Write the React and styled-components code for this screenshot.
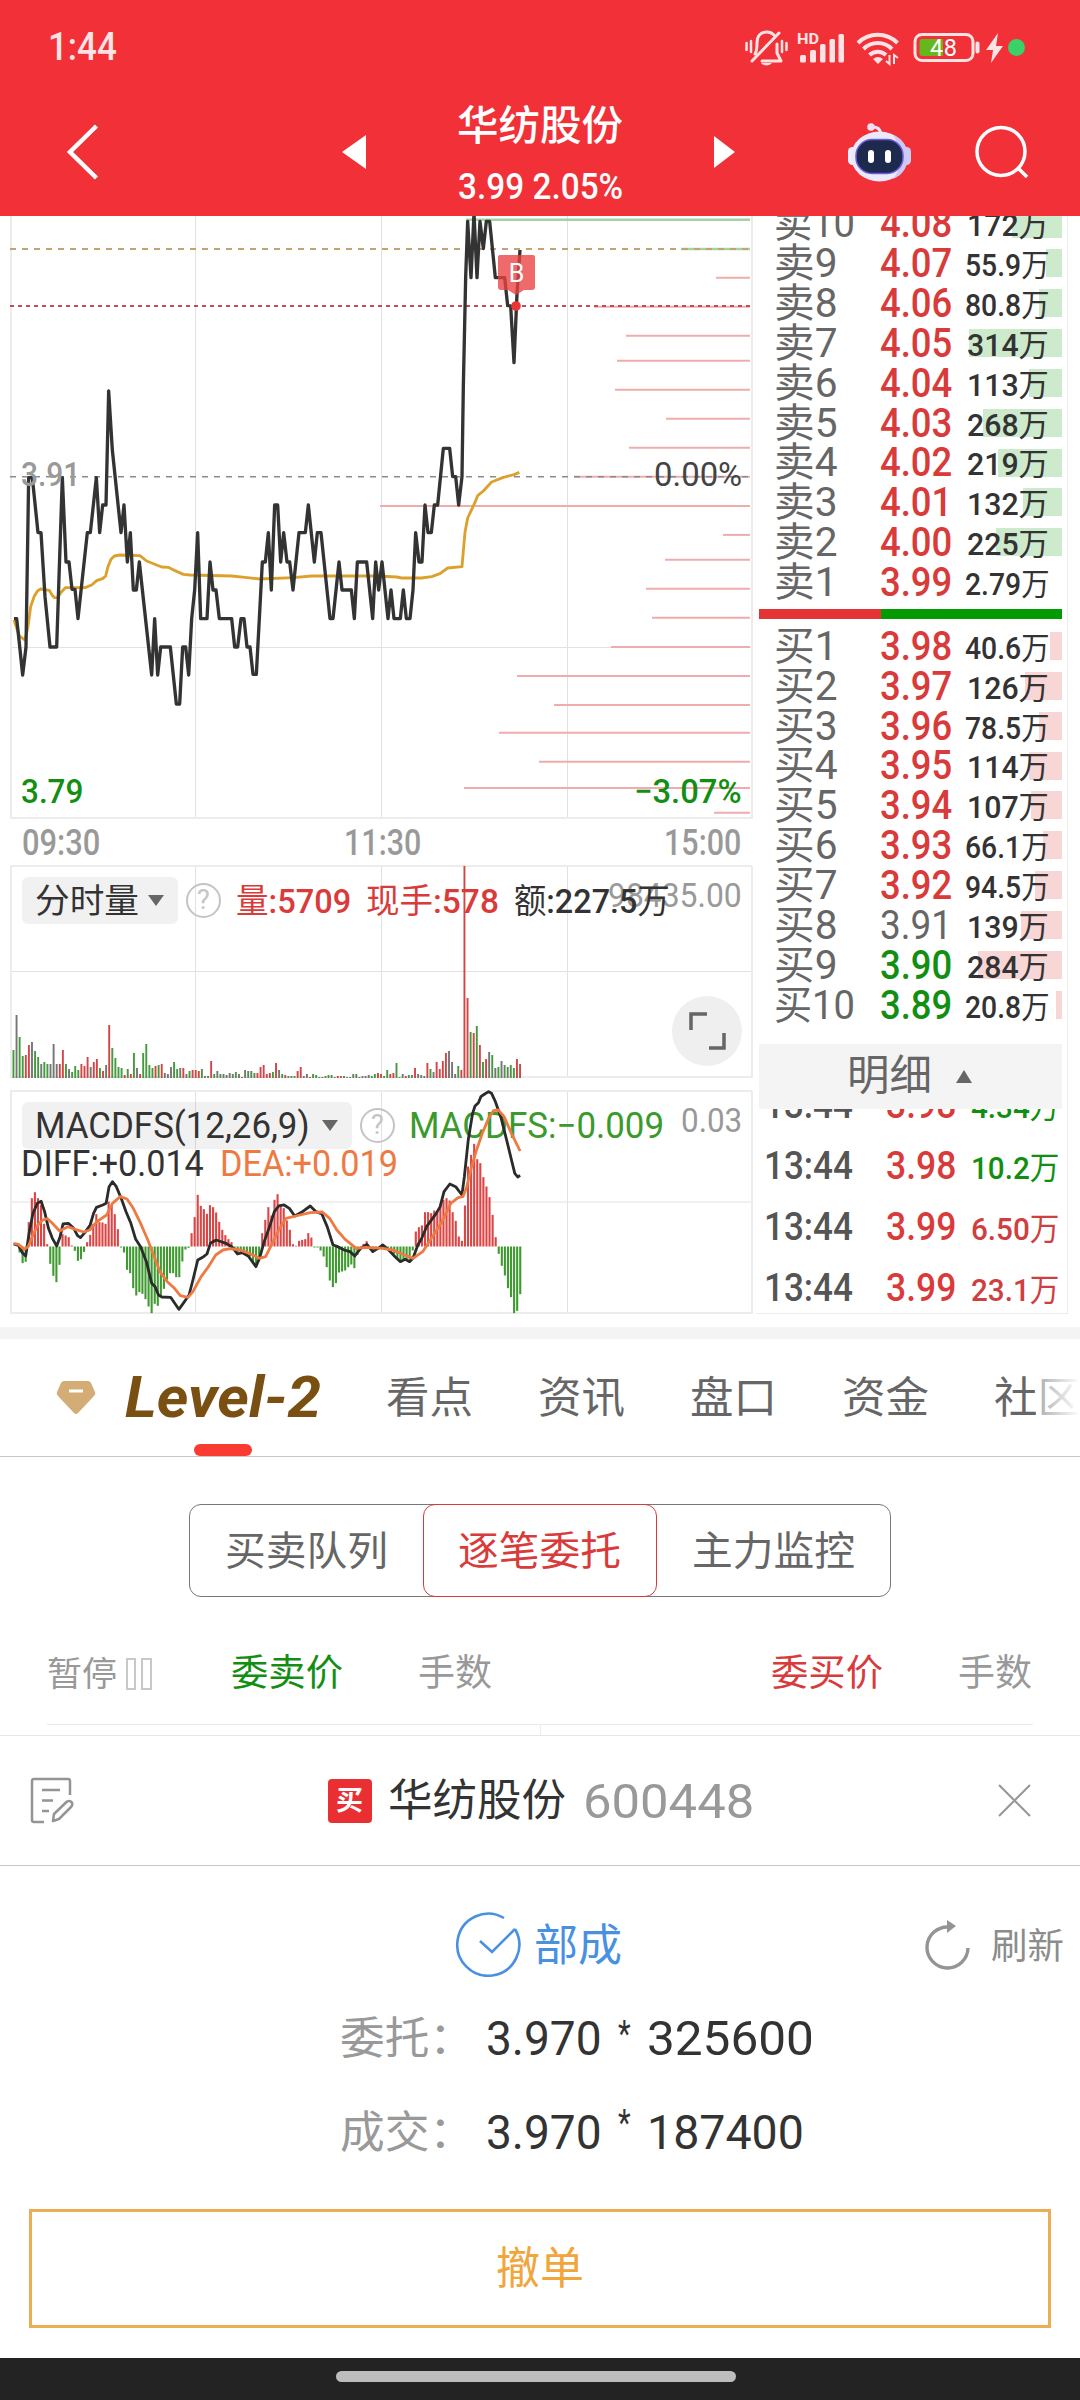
import React, { useLayoutEffect, useRef, useState } from 'react'
import styled, { createGlobalStyle } from 'styled-components'

const GlobalStyle = createGlobalStyle`
  * {
    box-sizing: border-box;
  }
  body {
    margin: 0;
    background: #fff;
    font-family: Roboto, "Noto Sans CJK SC", sans-serif;
    color: #333;
  }
`

const RED = '#d93a3a'
const GREEN = '#128f12'
const GREY = '#999'

/* ---------- text squeezed to a given width ---------- */

const Slot = styled.span`
  display: inline-block;
  flex: none;
  white-space: nowrap;
  width: ${props => props.$w}px;
  height: ${props => props.$size}px;
  line-height: ${props => props.$size}px;
  font-size: ${props => props.$size}px;
  font-weight: ${props => props.$weight || 400};
  font-style: ${props => (props.$italic ? 'italic' : 'normal')};
  color: ${props => props.$color || 'inherit'};
`

const Glyphs = styled.span`
  display: inline-block;
  transform-origin: 0 50%;
`

// hanzi keep a lighter weight than the figures next to them
const Han = styled.span`
  font-weight: ${props => props.$weight};
`

const Fit = ({ w, size, weight, han = 400, color, italic, children }) => {
    const ref = useRef(null)
    const [k, setK] = useState(1)

    useLayoutEffect(() => {
        setK(w / ref.current.offsetWidth)
    }, [w, children])

    return (
        <Slot $w={w} $size={size} $weight={weight} $color={color} $italic={italic}>
            <Glyphs ref={ref} style={{ transform: `scaleX(${k})` }}>
                {children.split(/([\u4e00-\u9fff]+)/).filter(Boolean).map((part, i) => (
                    /[\u4e00-\u9fff]/.test(part) ? <Han key={i} $weight={han}>{part}</Han> : part
                ))}
            </Glyphs>
        </Slot>
    )
}

/* ---------- header ---------- */

const Page = styled.div`
  width: 1080px;
  height: 2400px;
  display: flex;
  flex-direction: column;
  overflow: hidden;
  background: #fff;
`

const Header = styled.header`
  height: 216px;
  flex: none;
  background: #f13037;
  color: #fff;
`

const StatusBar = styled.div`
  height: 94px;
  padding: 0 55px 0 48px;
  display: flex;
  align-items: center;
  justify-content: space-between;
`

const NavBar = styled.div`
  height: 122px;
  padding: 0 51px 7px 64px;
  display: flex;
  align-items: center;
`

const TitleGroup = styled.div`
  display: flex;
  align-items: center;
  justify-content: space-between;
  width: 393px;
  margin-left: 242px;
`

const TitleText = styled.div`
  display: flex;
  flex-direction: column;
  align-items: center;
  gap: 21px;
  margin-top: 7px;
`

const NavActions = styled.div`
  display: flex;
  align-items: center;
  gap: 63px;
  margin-left: auto;
`

/* ---------- market ---------- */

const Market = styled.section`
  display: flex;
  height: 1111px;
  flex: none;
`

const Charts = styled.div`
  width: 756px;
  flex: none;
`

const Panel = styled.div`
  position: relative;
  height: ${props => props.$h}px;
  margin-bottom: ${props => props.$gap || 0}px;
`

const Plot = styled.svg`
  position: absolute;
  left: 0;
  top: 0;
  display: block;
`

// labels that float over the plot
const Mark = styled.div`
  position: absolute;
  display: flex;
  left: ${props => props.$x}px;
  top: ${props => props.$y}px;
`

const TimeAxis = styled.div`
  height: 47px;
  padding: 3px 15px 0 22px;
  display: flex;
  align-items: center;
  justify-content: space-between;
`

const Legend = styled.div`
  position: relative;
  display: flex;
  align-items: center;
  padding: ${props => props.$top}px 0 0 22px;
`

const Chip = styled.div`
  display: flex;
  align-items: center;
  justify-content: space-between;
  width: ${props => props.$w}px;
  height: 47px;
  padding: 0 14px 0 13px;
  border-radius: 6px;
  background: rgba(0, 0, 0, 0.055);
`

const Help = styled.div`
  width: 35px;
  height: 35px;
  margin: 0 ${props => props.$gap}px 0 8px;
  border: 2px solid #c4c4c4;
  border-radius: 50%;
  color: #c4c4c4;
  font-size: 27px;
  line-height: 31px;
  text-align: center;
`

const Figures = styled.div`
  display: flex;
  gap: 15px;
`

const Detail = styled.div`
  position: relative;
  display: flex;
  gap: 16px;
  padding-left: 21px;
  margin-top: -3px;
`

const ExpandButton = styled.div`
  position: absolute;
  left: 672px;
  top: 131px;
  width: 70px;
  height: 70px;
  border-radius: 50%;
  background: #efefef;
`

/* ---------- order book ---------- */

const Book = styled.div`
  width: 312px;
  height: 1098px;
  padding: 0 5px 0 3px;
  border-right: 1px solid #ececec;
  border-bottom: 1px solid #ececec;
  overflow: hidden;
`

const Levels = styled.div`
  margin-top: ${props => props.$top}px;
  height: ${props => props.$h}px;
`

const Level = styled.div`
  position: relative;
  display: flex;
  align-items: center;
  height: 39.85px;
  padding: 0 13px 0 15px;
`

const LevelName = styled.div`
  display: flex;
  width: 106px;
  color: #666;
`

const Depth = styled.span`
  position: absolute;
  right: 0;
  top: 5px;
  height: 28px;
  background: ${props => (props.$side === 'ask' ? '#cdeacd' : '#f9d6d6')};
`

const Volume = styled.div`
  position: relative;
  flex: 1;
  display: flex;
  justify-content: flex-end;
  padding-top: 3px;
`

const Ratio = styled.div`
  display: flex;
  height: 10px;
  margin-top: 6.5px;
  background: #049a04;
`

const RatioBuy = styled.div`
  width: 122px;
  background: #e43434;
`

const DetailHead = styled.div`
  display: flex;
  align-items: center;
  height: 65px;
  margin-top: 17.5px;
  padding-left: 88px;
  gap: 24px;
  background: #f4f4f4;
`

const Ticks = styled.div`
  height: 205px;
  overflow: hidden;
`

const TickList = styled.div`
  margin-top: -33.5px;
`

const Tick = styled.div`
  display: flex;
  align-items: center;
  height: 61px;
  padding: 0 3px 0 5px;
`

const TickPrice = styled.div`
  display: flex;
  margin-left: 33px;
`

/* ---------- tabs ---------- */

const Band = styled.div`
  height: 12px;
  flex: none;
  background: #f4f4f4;
`

const Tabs = styled.nav`
  display: flex;
  align-items: center;
  height: 118px;
  flex: none;
  border-bottom: 1px solid #c6c6c6;
  padding-left: 56px;
  overflow: hidden;
  position: relative;
`

const Level2 = styled.div`
  display: flex;
  align-items: center;
  flex: none;
  gap: 29px;
  width: 330px;
`

const Tab = styled.div`
  display: flex;
  width: 152px;
  flex: none;
  padding-top: 2px;
  color: #666;
`

const ActiveLine = styled.div`
  position: absolute;
  left: 194px;
  bottom: 0;
  width: 58px;
  height: 12px;
  border-radius: 6px;
  background: #fa3b32;
`

const Fade = styled.div`
  position: absolute;
  right: 0;
  top: 0;
  width: 44px;
  height: 110px;
  background: linear-gradient(to right, rgba(255, 255, 255, 0.45), #fff);
`

const Segments = styled.div`
  display: flex;
  flex: none;
  width: 702px;
  height: 93px;
  margin: 47px 0 0 189px;
  border: 1px solid #777;
  border-radius: 12px;
`

const Segment = styled.div`
  flex: 1;
  display: flex;
  align-items: center;
  justify-content: center;
  margin: -1px 0;
  padding-top: 3px;
  border-radius: 12px;
  border: 1px solid ${props => (props.$active ? RED : 'transparent')};
  color: ${props => (props.$active ? RED : '#666')};
`

const Columns = styled.div`
  display: flex;
  align-items: center;
  flex: none;
  height: 128px;
  margin: 0 47px;
  padding-top: 26px;
  border-bottom: 1px solid #eaeaea;
  color: ${GREY};
`

const Column = styled.div`
  display: flex;
  align-items: center;
  gap: 9px;
  width: ${props => props.$w}px;
`

const Split = styled.div`
  width: 541px;
  height: 10px;
  flex: none;
  border-right: 1px solid #eee;
`

/* ---------- order card ---------- */

const OrderBar = styled.div`
  display: flex;
  align-items: center;
  justify-content: space-between;
  flex: none;
  height: 131px;
  padding: 0 49px 0 29px;
  border-top: 1px solid #e6e6e6;
  border-bottom: 1px solid #c6c6c6;
`

const OrderName = styled.div`
  display: flex;
  align-items: center;
  margin-left: 8px;
`

const BuyTag = styled.div`
  display: flex;
  align-items: center;
  justify-content: center;
  width: 44px;
  height: 44px;
  margin-right: 16px;
  padding-top: 2px;
  border-radius: 4px;
  background: #ea2f33;
`

const Code = styled.div`
  display: flex;
  margin-left: 17px;
  padding-top: 2px;
`

const Status = styled.div`
  display: flex;
  align-items: center;
  flex: none;
  height: 156px;
  padding: 0 16px 0 455px;
`

const StatusLabel = styled.div`
  display: flex;
  flex: 1;
  margin-left: 13px;
  padding-top: 3px;
`

const Refresh = styled.div`
  display: flex;
  align-items: center;
  gap: 20px;
  padding-top: 2px;
`

const RefreshText = styled.div`
  display: flex;
  padding-top: 4px;
`

const OrderLine = styled.div`
  display: flex;
  align-items: center;
  flex: none;
  height: 94px;
  padding-left: 340px;
  margin-top: ${props => props.$top || 0}px;
`

const OrderValue = styled.div`
  display: flex;
  align-items: center;
  gap: 16px;
  margin-left: 12px;
`

const Times = styled.div`
  display: flex;
  padding-bottom: ${props => props.$lift}px;
`

const CancelButton = styled.button`
  display: flex;
  align-items: center;
  justify-content: center;
  flex: none;
  width: 1022px;
  height: 119px;
  margin: 29px 0 0 29px;
  padding: 0;
  border: 3px solid #ecae55;
  background: #fff;
  font-family: inherit;
`

const HomeBar = styled.footer`
  display: flex;
  flex: none;
  height: 42px;
  margin-top: auto;
  padding: 13px 0 0 336px;
  background: #232323;
`

const HomePill = styled.div`
  width: 400px;
  height: 11px;
  border-radius: 6px;
  background: #bdbdbd;
`

/* ---------- data ---------- */

const asks = [
    ['10', '4.08', '172万', 50],
    ['9', '4.07', '55.9万', 16],
    ['8', '4.06', '80.8万', 23],
    ['7', '4.05', '314万', 93],
    ['6', '4.04', '113万', 33],
    ['5', '4.03', '268万', 79],
    ['4', '4.02', '219万', 64],
    ['3', '4.01', '132万', 39],
    ['2', '4.00', '225万', 66],
    ['1', '3.99', '2.79万', 0],
]

const bids = [
    ['1', '3.98', '40.6万', 12],
    ['2', '3.97', '126万', 37],
    ['3', '3.96', '78.5万', 23],
    ['4', '3.95', '114万', 33],
    ['5', '3.94', '107万', 31],
    ['6', '3.93', '66.1万', 19],
    ['7', '3.92', '94.5万', 27],
    ['8', '3.91', '139万', 41],
    ['9', '3.90', '284万', 84],
    ['10', '3.89', '20.8万', 6],
]

const ticks = [
    ['13:44', '3.98', '4.34万', GREEN],
    ['13:44', '3.98', '10.2万', GREEN],
    ['13:44', '3.99', '6.50万', '#cf3f3f'],
    ['13:44', '3.99', '23.1万', '#cf3f3f'],
]

const priceLine = '42,1226 50,1226 57,1290 68,1395 78,1311 86,803 97,803 114,968 123,968 135,1160 150,1311 170,1311 187,803 198,1056 207,1056 216,1138 225,1138 234,1226 262,968 271,968 289,803 299,968 308,885 318,885 326,543 337,720 363,968 372,885 382,1056 391,968 400,1140 409,1140 418,1056 455,1395 464,1226 473,1395 482,1311 511,1311 529,1482 539,1482 548,1311 557,1311 566,1395 575,1226 584,1140 593,968 602,1226 621,1226 630,1056 639,1140 648,1140 658,1226 695,1226 704,1311 713,1311 723,1226 732,1226 741,1311 750,1311 759,1393 769,1393 778,1226 787,1056 796,1056 805,968 814,1140 824,885 833,885 842,1056 851,968 861,1056 869,1056 879,1140 897,968 916,968 925,885 943,1056 952,968 963,968 990,1226 999,1226 1017,1056 1026,1140 1054,1140 1063,1226 1072,1056 1100,1056 1118,1226 1127,1056 1136,1140 1146,1056 1164,1226 1173,1140 1182,1226 1201,1226 1210,1140 1219,1226 1230,1226 1239,1140 1247,968 1257,1056 1266,1056 1275,885 1284,968 1294,968 1303,885 1313,885 1330,715 1349,715 1358,800 1367,800 1376,885 1386,800 1390,530 1397,202 1403,34 1413,203 1422,10 1431,203 1440,34 1450,116 1459,34 1469,34 1486,203 1514,203 1523,287 1532,288 1542,458 1551,252 1560,120'

const averageLine = '42,1230 58,1278 68,1285 75,1290 84,1250 92,1190 103,1158 113,1142 122,1137 148,1141 156,1155 163,1163 173,1163 182,1148 196,1133 255,1133 275,1125 290,1112 308,1106 317,1098 324,1070 333,1048 343,1038 360,1035 420,1037 440,1053 485,1071 505,1072 525,1082 550,1093 570,1095 695,1098 735,1102 780,1107 880,1103 935,1098 1130,1098 1190,1101 1205,1104 1265,1104 1295,1100 1320,1091 1343,1074 1386,1070 1390,1023 1395,967 1403,924 1422,884 1433,857 1450,843 1475,816 1510,802 1542,794 1558,787'

// [y, left edge], drawn up to the right side of the plot
const chips = [
    [277.8, 716], [306.8, 594], [335.8, 626], [360.7, 617], [389.7, 615], [418.8, 666], [447.8, 629],
    [476.8, 574], [505.9, 380], [534.9, 723], [559.8, 665], [588.8, 646], [617.8, 652], [646.9, 611],
    [675.9, 517], [705, 554], [732.7, 499], [761.8, 539], [787.9, 464], [812.7, 714],
]

const volumes = 'g28 k63 g41 g22 r23 r33 k36 g27 g21 k14 g16 g14 k14 k34 k14 r14 r28 g14 k9 g6 g12 g8 r14 r12 r21 k11 r16 r19 g10 r7 k13 r53 g30 g20 g11 g10 r3 g9 r4 g25 k10 r4 g25 g34 g13 g10 r12 g13 r14 k5 k4 k11 g16 g9 k10 r10 k4 g7 r8 r8 r7 g9 k2 k2 r17 g4 k7 g4 k4 k3 k5 k4 g6 k4 r1 k8 g7 k7 g5 r5 r11 r13 r4 r5 g6 r15 k8 g4 r3 g2 k2 g2 r7 r11 k2 k4 r1 g4 g3 g1 r1 g2 g3 g3 k1 r2 r2 g2 k1 k1 k4 g4 r1 k2 k2 k3 g2 g4 r5 r4 g2 g8 r4 r5 g15 k1 k4 r2 g3 k3 r10 k4 g3 k2 r15 g9 k6 r16 r9 r17 r25 k27 k16 k4 g12 r8 r212 r80 g46 r45 g52 r33 g16 r19 k26 g23 k10 g11 k17 g13 k11 g13 g10 r19 r14'.split(' ')

const volumeColors = { r: '#d24545', g: '#45993f', k: '#757575' }

const macd = [
    -18, -50, -46, 73, 145, 163, 145, 125, 68, 7, -52, -88, -107, -55, 37, 33, 28, 3, -13, -43, -38, -16,
    13, 35, 68, 97, 73, 72, 68, 135, 125, 97, 52, -3, -18, -70, -80, -125, -147, -137, -142, -158, -180,
    -200, -172, -178, -148, -127, -100, -80, -80, -92, -92, -45, -9, -4, 40, 88, 155, 122, 112, 98, 124,
    118, 102, 74, 50, 34, 22, 13, -10, -25, -20, -18, -25, -30, -50, -58, -45, 40, 80, 118, 93, 140, 157,
    125, 115, 78, 50, 7, 2, 17, 20, 22, 40, 27, -3, -3, -12, -30, -62, -102, -122, -110, -78, -75, -72,
    -62, -54, -65, -25, -10, 8, 16, 0, -18, -4, 0, 8, 2, -4, -12, -22, -35, -45, -38, -40, -40, -12, 45,
    58, 63, 103, 103, 100, 108, 105, 122, 140, 145, 138, 103, 77, 30, 17, 123, 240, 275, 308, 262, 250,
    208, 180, 148, 95, 28, -22, -58, -87, -125, -152, -200, -193, -143,
]

const diffLine = '28,522 38,526 46,548 53,558 60,490 68,430 77,400 85,394 92,425 100,475 108,505 117,528 124,500 130,462 141,460 152,475 160,497 166,503 175,488 186,465 193,430 199,412 212,405 219,400 225,350 232,335 240,350 250,385 260,425 270,460 280,508 290,530 302,575 313,640 320,650 327,675 334,681 352,682 369,718 378,700 390,675 398,630 408,570 420,560 427,552 434,520 446,510 458,516 466,520 478,530 490,552 500,548 512,558 528,590 536,562 545,515 555,475 566,425 575,408 586,405 597,415 608,438 622,427 640,408 652,425 664,432 675,470 687,525 697,530 710,540 722,545 732,558 744,535 757,523 769,545 780,535 790,525 802,540 815,560 826,575 836,568 845,575 852,565 862,525 870,505 880,470 900,430 908,410 916,365 928,342 940,350 953,375 958,320 966,210 975,130 980,108 987,98 992,80 1000,72 1008,65 1014,70 1022,95 1034,145 1046,215 1056,275 1062,310 1068,321 1073,316'

const deaLine = '28,520 38,523 50,538 58,530 68,495 78,465 88,450 98,446 108,460 123,483 140,470 155,478 173,486 185,480 200,455 220,435 232,400 248,380 262,387 275,415 290,460 305,510 318,560 330,605 345,635 360,655 372,677 388,682 398,665 415,620 430,590 445,555 460,540 475,536 495,540 515,550 535,565 548,560 560,525 575,480 590,445 610,438 640,428 665,426 680,445 695,480 712,508 735,535 755,532 790,535 810,540 830,552 852,565 872,545 890,505 910,460 930,400 945,383 955,380 963,350 972,295 982,245 995,190 1008,145 1018,122 1028,120 1040,140 1055,190 1073,243'

/* ---------- icons ---------- */

const StatusIcons = () => (
    <svg width="282" height="44" viewBox="743 24 282 44" fill="none" stroke="#ffe3e4">
        <g strokeWidth="3" strokeLinecap="round" strokeLinejoin="round">
            <path d="M752 60 L779 32" />
            <path d="M755 53 C757 50 757 46 757 42 C757 35 761 31 767 31 C770 31 772 32 774 34" />
            <path d="M762 60 H781 L777 52 V43" />
            <path d="M746.500 42 V49 M751 40 V51 M782 40 V51 M786.500 42 V49" strokeWidth="2.500" />
        </g>
        <path d="M761 62 H772 A6 4 0 0 1 761 62Z" fill="#ffe3e4" stroke="none" />
        <g fill="#ffe3e4" stroke="none">
            <text x="797" y="43" fontSize="15" fontWeight="700" textLength="22" lengthAdjust="spacingAndGlyphs">HD</text>
            <rect x="800" y="54" width="6" height="7.500" rx="1.500" />
            <rect x="810" y="49" width="6" height="12.500" rx="1.500" />
            <rect x="820" y="43" width="5.500" height="18.500" rx="1.500" />
            <rect x="829.500" y="38" width="5.500" height="23.500" rx="1.500" />
            <rect x="838.500" y="33" width="5.500" height="28.500" rx="1.500" />
        </g>
        <g strokeWidth="4">
            <path d="M858 42 A28 28 0 0 1 897.500 42" />
            <path d="M863.500 48 A20 20 0 0 1 892 48" />
            <path d="M869.500 54 A12 12 0 0 1 886 54" />
        </g>
        <path d="M873 58 Q878 54 883 58 L878 63Z" fill="#ffe3e4" stroke="none" />
        <path d="M889.500 54 V63 L886 60 M894 63 V54 L898 57" strokeWidth="2" />
        <rect x="915" y="33.500" width="58" height="26" rx="7" strokeWidth="3" />
        <path d="M922 38 H943 V55 H922 Q919.500 55 919.500 52 V41 Q919.500 38 922 38Z" fill="#64b81e" stroke="none" />
        <path d="M977.500 42.500 V50.500" strokeWidth="4" strokeLinecap="round" />
        <text x="930" y="55" fontSize="23.500" fill="#fff" stroke="none" textLength="27">48</text>
        <path d="M998 32 L986 49 H993 L991 62 L1003 45 H996Z" fill="#ffe3e4" stroke="none" />
        <circle cx="1016.500" cy="46.500" r="8.500" fill="#38d16a" stroke="none" />
    </svg>
)

const BackIcon = () => (
    <svg width="36" height="60" viewBox="64 121 36 60">
        <path d="M96.500 125 L70 151 L96.500 177" fill="none" stroke="#fff" strokeWidth="4.500" />
    </svg>
)

const RobotIcon = () => (
    <svg width="64" height="60" viewBox="848 121 64 60">
        <path d="M871 126 Q880 125 881 133" fill="none" stroke="#e9e4f8" strokeWidth="3" />
        <circle cx="871" cy="126" r="3.800" fill="#f4dff0" />
        <rect x="848" y="146" width="9" height="18" rx="4.500" fill="#f0ecfb" />
        <rect x="902" y="146" width="9" height="18" rx="4.500" fill="#cfc9f3" />
        <ellipse cx="879.500" cy="155.500" rx="28.500" ry="25" fill="#ece9fb" />
        <path d="M893 134 C913 142 913 170 893 178 C902 168 902 146 893 134Z" fill="#cdc8f5" />
        <rect x="856" y="138.500" width="47" height="34" rx="16" fill="#1e2a4d" stroke="#6a5be0" strokeWidth="1.500" />
        <rect x="868" y="149" width="6" height="13" rx="3" fill="#fff" />
        <rect x="885" y="149" width="6" height="13" rx="3" fill="#fff" />
    </svg>
)

const SearchIcon = () => (
    <svg width="54" height="56" viewBox="975 124 54 56" fill="none" stroke="#fff" strokeWidth="3.500">
        <circle cx="1001" cy="151.500" r="24" />
        <path d="M1018 168 L1027 177" />
    </svg>
)

const Triangle = ({ w, h, d, fill }) => (
    <svg width={w} height={h}>
        <path d={d} fill={fill} />
    </svg>
)

const DiamondIcon = () => (
    <svg width="40" height="38" viewBox="0 0 40 38">
        <path d="M8 2 H32 Q34 2 35 4 L39 13 Q40 15 38 17 L22 34 Q20 36 18 34 L2 17 Q0 15 1 13 L5 4 Q6 2 8 2Z" fill="#d3ac76" />
        <path d="M13 12 H27" stroke="#fff" strokeWidth="3" />
    </svg>
)

const NoteIcon = () => (
    <svg width="46" height="48" viewBox="29 1776 46 48" fill="none" stroke="#949494" strokeWidth="2.500">
        <path d="M44 1821 H34 Q32 1821 32 1819 V1780 Q32 1778 34 1778 H68 Q70 1778 70 1780 V1794" />
        <path d="M42 1789 H60 M42 1799.500 H53 M42 1810 H49" />
        <path d="M53 1820 L54 1813 L67 1800.500 Q70 1799 72 1801.500 Q73 1804 71 1806 L59 1818Z" strokeLinejoin="round" />
    </svg>
)

const CloseIcon = () => (
    <svg width="33" height="33" viewBox="0 0 33 33">
        <path d="M1 1 L32 32 M32 1 L1 32" stroke="#999" strokeWidth="2.200" />
    </svg>
)

const PartIcon = () => (
    <svg width="66" height="66" viewBox="0 0 66 66" fill="none" stroke="#4a90e2" strokeWidth="2.600">
        <path d="M49 7 A31 31 0 1 0 60 18" />
        <path d="M25 30 L37 41 L60 18" />
    </svg>
)

const RefreshIcon = () => (
    <svg width="46" height="50" viewBox="0 0 46 50" fill="none">
        <path d="M43 28 A20.500 20.500 0 1 1 24 7" stroke="#949494" strokeWidth="3.400" />
        <path d="M22 0 L31 6 L22 13Z" fill="#949494" />
    </svg>
)

/* ---------- charts ---------- */

const Grid = ({ top, bottom, mid }) => (
    <g stroke="#e2e2e2" strokeWidth="1">
        <path d={`M195.500 ${top}V${bottom}M381.500 ${top}V${bottom}M567.500 ${top}V${bottom}`} />
        <path d={`M10 ${mid}H752`} />
        <path d={`M11 ${top}V${bottom}H752V${top}`} fill="none" stroke="#ececec" strokeWidth="2" />
    </g>
)

const PriceChart = () => (
    <Panel $h={602}>
        <Plot width="756" height="603" viewBox="0 216 756 603">
            <Grid top={210} bottom={818} mid={647.5} />
            <g stroke="#eeacac" strokeWidth="2">
                {chips.map(([y, x]) => <path key={y} d={`M${x} ${y}H750`} />)}
            </g>
            <path d="M466 219.700H750M681 249H750" stroke="#a3d2a3" strokeWidth="2.500" />
            <path d="M10 249H750" stroke="#c4a273" strokeWidth="2" strokeDasharray="6 6" />
            <path d="M10 306H750" stroke="#c14d58" strokeWidth="2" strokeDasharray="4 4" />
            <path d="M10 476.700H750" stroke="#8b8b8b" strokeWidth="1.500" strokeDasharray="6 6" />
            <g transform="translate(0 210) scale(0.33333)" fill="none" strokeLinejoin="round" strokeWidth="10">
                <polyline points={averageLine} stroke="#dca02c" strokeWidth="8.500" />
                <polyline points={priceLine} stroke="#333" />
            </g>
            <path d="M500 255H533Q535 255 535 257V287Q535 290 532 290H524L516 295L508 290H501Q498 290 498 287V257Q498 255 500 255Z" fill="#ea4040" opacity="0.780" />
            <text x="516.500" y="281.500" fontSize="25" fill="#fff" textAnchor="middle">B</text>
            <circle cx="516" cy="306" r="4.800" fill="#ea3535" />
        </Plot>
        <Mark $x={21} $y={241}><Fit w={59} size={34} weight={500} color="#999">3.91</Fit></Mark>
        <Mark $x={654} $y={241}><Fit w={88} size={34} color="#444">0.00%</Fit></Mark>
        <Mark $x={21} $y={558}><Fit w={62} size={34} weight={500} color={GREEN}>3.79</Fit></Mark>
        <Mark $x={634} $y={558}><Fit w={108} size={34} weight={500} color={GREEN}>−3.07%</Fit></Mark>
    </Panel>
)

const VolumeChart = () => (
    <Panel $h={213} $gap={12}>
        <Plot width="756" height="213" viewBox="0 865 756 213">
            <Grid top={866} bottom={1077} mid={971.5} />
            <path d="M10 866H752" stroke="#ececec" strokeWidth="2" />
            {volumes.map((v, i) => (
                <rect key={i} x={12.500 + i * 3.089} y={1078 - v.slice(1)} width="1.900" height={v.slice(1)} fill={volumeColors[v[0]]} />
            ))}
        </Plot>
        <Mark $x={608} $y={13}><Fit w={134} size={34} color="#999">98435.00</Fit></Mark>
        <Legend $top={12}>
            <Chip $w={156}>
                <Fit w={104} size={34}>分时量</Fit>
                <Triangle w={16} h={11} d="M0 0H16L8 11Z" fill="#666" />
            </Chip>
            <Help $gap={15}>?</Help>
            <Figures>
                <Fit w={115} size={34} weight={500} color={RED}>量:5709</Fit>
                <Fit w={133} size={34} weight={500} color={RED}>现手:578</Fit>
                <Fit w={156} size={34} weight={500}>额:227.5万</Fit>
            </Figures>
        </Legend>
        <ExpandButton>
            <svg width="70" height="70" fill="none" stroke="#666" strokeWidth="3.500">
                <path d="M19 34V18H35M52 37V52H37" />
            </svg>
        </ExpandButton>
    </Panel>
)

const MacdChart = () => (
    <Panel $h={224}>
        <Plot width="756" height="224" viewBox="0 1090 756 224">
            <Grid top={1091} bottom={1313} mid={1202} />
            <path d="M10 1091H752" stroke="#ececec" strokeWidth="2" />
            {macd.map((v, i) => (
                <rect
                    key={i}
                    x={18.500 + i * 500.700 / (macd.length - 1)}
                    y={v > 0 ? 1246.500 - v / 3 : 1246.500}
                    width="2.100"
                    height={Math.abs(v) / 3}
                    fill={v > 0 ? '#dd4444' : '#3f9a30'}
                />
            ))}
        </Plot>
        <Mark $x={681} $y={13}><Fit w={61} size={34} color="#999">0.03</Fit></Mark>
        <Legend $top={12}>
            <Chip $w={330}>
                <Fit w={275} size={36}>MACDFS(12,26,9)</Fit>
                <Triangle w={16} h={11} d="M0 0H16L8 11Z" fill="#666" />
            </Chip>
            <Help $gap={14}>?</Help>
            <Fit w={255} size={36} color="#3c9a2c">MACDFS:−0.009</Fit>
        </Legend>
        <Detail>
            <Fit w={183} size={36}>DIFF:+0.014</Fit>
            <Fit w={178} size={36} color="#ee7a42">DEA:+0.019</Fit>
        </Detail>
        <Plot width="756" height="224" viewBox="0 1090 756 224">
            <g transform="translate(0 1070) scale(0.48473 0.33333)" fill="none" strokeWidth="2.800" strokeLinejoin="round">
                <polyline points={diffLine} stroke="#2b2b2b" vectorEffect="non-scaling-stroke" />
                <polyline points={deaLine} stroke="#ee7a42" vectorEffect="non-scaling-stroke" />
            </g>
        </Plot>
    </Panel>
)

const priceColor = price => {
    if (price === '3.91') return '#666'
    return price > '3.91' ? RED : GREEN
}

const BookRow = ({ side, level }) => {
    const [n, price, qty, depth] = level
    return (
        <Level>
            <Depth $side={side} style={{ width: depth }} />
            <LevelName>
                <Fit w={n === '10' ? 81 : 63} size={40}>{(side === 'ask' ? '卖' : '买') + n}</Fit>
            </LevelName>
            <Fit w={72} size={40} weight={price === '3.91' ? 400 : 500} color={priceColor(price)}>{price}</Fit>
            <Volume>
                <Fit w={qty.length === 4 ? 82 : 84} size={31} weight={500}>{qty}</Fit>
            </Volume>
        </Level>
    )
}

const App = () => {
    return (
        <Page>
            <GlobalStyle />
            <Header>
                <StatusBar>
                    <Fit w={69} size={38} weight={500} color="#ffe3e4">1:44</Fit>
                    <StatusIcons />
                </StatusBar>
                <NavBar>
                    <BackIcon />
                    <TitleGroup>
                        <Triangle w={24} h={34} d="M24 0V34L0 17Z" fill="#fff" />
                        <TitleText>
                            <Fit w={166} size={41} han={500}>华纺股份</Fit>
                            <Fit w={165} size={37} weight={500}>3.99 2.05%</Fit>
                        </TitleText>
                        <Triangle w={21} h={32} d="M0 0V32L21 16Z" fill="#fff" />
                    </TitleGroup>
                    <NavActions>
                        <RobotIcon />
                        <SearchIcon />
                    </NavActions>
                </NavBar>
            </Header>

            <Market>
                <Charts>
                    <PriceChart />
                    <TimeAxis>
                        <Fit w={78} size={36} weight={500} color="#999">09:30</Fit>
                        <Fit w={77} size={36} weight={500} color="#999">11:30</Fit>
                        <Fit w={77} size={36} weight={500} color="#999">15:00</Fit>
                    </TimeAxis>
                    <VolumeChart />
                    <MacdChart />
                </Charts>
                <Book>
                    <Levels $top={-11.5} $h={398}>
                        {asks.map(level => <BookRow key={level[0]} side="ask" level={level} />)}
                    </Levels>
                    <Ratio><RatioBuy /></Ratio>
                    <Levels $top={8} $h={399}>
                        {bids.map(level => <BookRow key={level[0]} side="bid" level={level} />)}
                    </Levels>
                    <DetailHead>
                        <Fit w={85} size={42} color="#666">明细</Fit>
                        <Triangle w={16} h={13} d="M8 0L16 13H0Z" fill="#666" />
                    </DetailHead>
                    <Ticks>
                        <TickList>
                            {ticks.map(([time, price, qty, color], i) => (
                                <Tick key={i}>
                                    <Fit w={89} size={39} weight={500} color="#555">{time}</Fit>
                                    <TickPrice><Fit w={70} size={39} weight={500} color={RED}>{price}</Fit></TickPrice>
                                    <Volume><Fit w={88} size={32} weight={500} color={color}>{qty}</Fit></Volume>
                                </Tick>
                            ))}
                        </TickList>
                    </Ticks>
                </Book>
            </Market>

            <Band />
            <Tabs>
                <Level2>
                    <DiamondIcon />
                    <Fit w={196} size={57} weight={700} italic color="#7a4f12">Level-2</Fit>
                </Level2>
                {['看点', '资讯', '盘口', '资金', '社区'].map(tab => (
                    <Tab key={tab}><Fit w={87} size={43}>{tab}</Fit></Tab>
                ))}
                <ActiveLine />
                <Fade />
            </Tabs>

            <Segments>
                <Segment><Fit w={163} size={40}>买卖队列</Fit></Segment>
                <Segment $active><Fit w={163} size={40}>逐笔委托</Fit></Segment>
                <Segment><Fit w={163} size={40}>主力监控</Fit></Segment>
            </Segments>

            <Columns>
                <Column $w={184}>
                    <Fit w={70} size={34}>暂停</Fit>
                    <svg width="27" height="32" fill="none" stroke="#c8c8c8" strokeWidth="2">
                        <rect x="1" y="1" width="8" height="30" />
                        <rect x="16" y="1" width="9" height="30" />
                    </svg>
                </Column>
                <Column $w={187}><Fit w={112} size={37} color={GREEN}>委卖价</Fit></Column>
                <Column $w={353}><Fit w={74} size={37}>手数</Fit></Column>
                <Column $w={187}><Fit w={112} size={37} color={RED}>委买价</Fit></Column>
                <Column $w={74}><Fit w={74} size={37}>手数</Fit></Column>
            </Columns>
            <Split />

            <OrderBar>
                <NoteIcon />
                <OrderName>
                    <BuyTag><Fit w={27} size={27} han={700} color="#fff">买</Fit></BuyTag>
                    <Fit w={178} size={44}>华纺股份</Fit>
                    <Code><Fit w={171} size={49} color="#999">600448</Fit></Code>
                </OrderName>
                <CloseIcon />
            </OrderBar>

            <Status>
                <PartIcon />
                <StatusLabel><Fit w={88} size={44} color="#4a90e2">部成</Fit></StatusLabel>
                <Refresh>
                    <RefreshIcon />
                    <RefreshText><Fit w={73} size={36} color="#8c8c8c">刷新</Fit></RefreshText>
                </Refresh>
            </Status>

            <OrderLine $top={-30}>
                <Fit w={134} size={44} color="#999">委托：</Fit>
                <OrderValue>
                    <Fit w={116} size={48}>3.970</Fit>
                    <Times $lift={10}><Fit w={13} size={36}>*</Fit></Times>
                    <Fit w={167} size={48}>325600</Fit>
                </OrderValue>
            </OrderLine>
            <OrderLine>
                <Fit w={134} size={44} color="#999">成交：</Fit>
                <OrderValue>
                    <Fit w={116} size={48}>3.970</Fit>
                    <Times $lift={20}><Fit w={13} size={36}>*</Fit></Times>
                    <Fit w={157} size={48}>187400</Fit>
                </OrderValue>
            </OrderLine>

            <CancelButton><Fit w={88} size={44} color="#f0a63c">撤单</Fit></CancelButton>

            <HomeBar><HomePill /></HomeBar>
        </Page>
    )
}

export default App
